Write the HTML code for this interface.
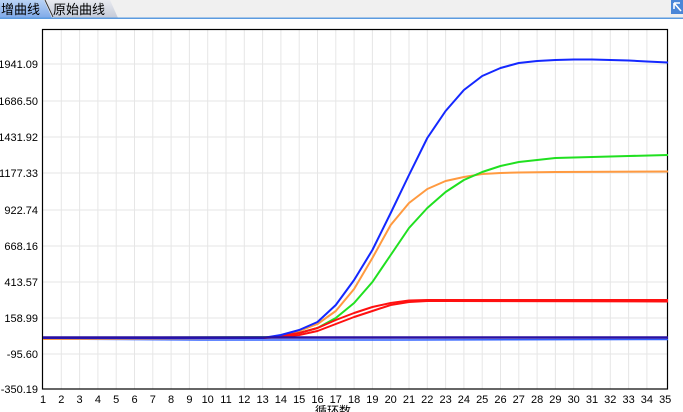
<!DOCTYPE html>
<html><head><meta charset="utf-8"><style>
body{margin:0;width:683px;height:412px;overflow:hidden;background:#fff;font-family:"Liberation Sans","Noto Sans CJK SC",sans-serif}
</style></head><body>
<svg width="683" height="412" xmlns="http://www.w3.org/2000/svg" style="position:absolute;left:0;top:0">
<defs><linearGradient id="tb" x1="0" y1="0" x2="0" y2="1"><stop offset="0" stop-color="#b9d3f5"/><stop offset="1" stop-color="#7fa9e8"/></linearGradient>
<linearGradient id="tg" x1="0" y1="0" x2="0" y2="1"><stop offset="0" stop-color="#e8eaf0"/><stop offset="1" stop-color="#c4cad8"/></linearGradient></defs>
<rect x="0" y="0" width="683" height="18" fill="#f0f0f0"/>
<polygon points="0,0 44,0 52,18 0,18" fill="url(#tb)"/>
<polygon points="46,0 110,0 118,18 54,18" fill="url(#tg)"/>
<line x1="45" y1="0" x2="53" y2="17" stroke="#333" stroke-width="1"/>
<rect x="0" y="17.5" width="683" height="1.5" fill="#5b9be0"/>
<rect x="671" y="0" width="12" height="14" fill="#4a86d8"/>
<path d="M674 3 L680 3 M674 3 L674 9 M674 3 L681 11" stroke="#fff" stroke-width="1.6" fill="none"/>
<text x="1" y="14" font-size="13" font-family="Noto Sans CJK SC,sans-serif" fill="#000">增曲线</text>
<text x="53" y="14" font-size="13" font-family="Noto Sans CJK SC,sans-serif" fill="#000">原始曲线</text>
<g stroke="#e6e6e6" stroke-width="1">
<path d="M61.3 29V389M79.6 29V389M97.9 29V389M116.2 29V389M134.5 29V389M152.8 29V389M171.1 29V389M189.4 29V389M207.7 29V389M226 29V389M244.3 29V389M262.6 29V389M280.9 29V389M299.2 29V389M317.5 29V389M335.8 29V389M354.1 29V389M372.4 29V389M390.7 29V389M409 29V389M427.3 29V389M445.6 29V389M463.9 29V389M482.2 29V389M500.5 29V389M518.8 29V389M537.1 29V389M555.4 29V389M573.7 29V389M592 29V389M610.3 29V389M628.6 29V389M646.9 29V389"/>
<path d="M42 64H668M42 101H668M42 137H668M42 173H668M42 210H668M42 246H668M42 282H668M42 318H668M42 354H668"/>
</g>
<rect x="42.5" y="29.5" width="625" height="359.5" fill="none" stroke="#000" stroke-width="1.2"/>
<g font-size="11" fill="#000" text-anchor="end">
<text x="38" y="68">1941.09</text><text x="38" y="105">1686.50</text><text x="38" y="141">1431.92</text><text x="38" y="177">1177.33</text><text x="38" y="214">922.74</text><text x="38" y="250">668.16</text><text x="38" y="286">413.57</text><text x="38" y="322">158.99</text><text x="38" y="358">-95.60</text><text x="38" y="393">-350.19</text>
</g>
<g font-size="11" fill="#000" text-anchor="middle">
<text x="43" y="403">1</text><text x="61.3" y="403">2</text><text x="79.6" y="403">3</text><text x="97.9" y="403">4</text><text x="116.2" y="403">5</text><text x="134.5" y="403">6</text><text x="152.8" y="403">7</text><text x="171.1" y="403">8</text><text x="189.4" y="403">9</text><text x="207.7" y="403">10</text><text x="226" y="403">11</text><text x="244.3" y="403">12</text><text x="262.6" y="403">13</text><text x="280.9" y="403">14</text><text x="299.2" y="403">15</text><text x="317.5" y="403">16</text><text x="335.8" y="403">17</text><text x="354.1" y="403">18</text><text x="372.4" y="403">19</text><text x="390.7" y="403">20</text><text x="409" y="403">21</text><text x="427.3" y="403">22</text><text x="445.6" y="403">23</text><text x="463.9" y="403">24</text><text x="482.2" y="403">25</text><text x="500.5" y="403">26</text><text x="518.8" y="403">27</text><text x="537.1" y="403">28</text><text x="555.4" y="403">29</text><text x="573.7" y="403">30</text><text x="592" y="403">31</text><text x="610.3" y="403">32</text><text x="628.6" y="403">33</text><text x="646.9" y="403">34</text><text x="665.2" y="403">35</text>
<text x="333" y="415" font-size="12" font-family="Noto Sans CJK SC,sans-serif">循环数</text>
</g>
<g fill="none" stroke-width="2" stroke-linejoin="round">
<polyline stroke="#3060ff" stroke-width="1.5" points="43,339 200,340 400,340 668,339.5"/>
<polyline stroke="#ff9a40" points="43,339 262.6,338 280.9,336 299.2,331 317.5,324 335.8,311 354.1,289 372.4,258 390.7,225 409,203 427.3,189 445.6,181 463.9,177 482.2,174 500.5,173 518.8,172.5 555.4,172 668,171.5"/>
<polyline stroke="#20e020" points="43,338 280.9,337 299.2,333 317.5,328 335.8,318 354.1,303 372.4,282 390.7,255 409,228 427.3,208 445.6,192 463.9,180 482.2,172 500.5,166 518.8,162 537.1,160 555.4,158 573.7,157.5 592,157 628.6,156 668,155"/>
<polyline stroke="#ff1010" points="43,338 262.6,338 280.9,337 299.2,335 317.5,331 335.8,324 354.1,317 372.4,311 390.7,305 409,302 427.3,301 445.6,301 668,301.5"/>
<polyline stroke="#ff1010" points="43,338 262.6,338 280.9,336 299.2,333 317.5,328 335.8,320 354.1,313 372.4,307 390.7,303 409,300.5 427.3,300 668,300"/>
<polyline stroke="#1428ff" points="43,338 262.6,338 280.9,335 299.2,330 317.5,322 335.8,305 354.1,280 372.4,250 390.7,213 409,175 427.3,138 445.6,111 463.9,90 482.2,76 500.5,68 518.8,63 537.1,61 555.4,60 573.7,59.5 592,59.5 610.3,60 628.6,60.5 646.9,61.5 668,62.5"/>
<line x1="43" y1="337.5" x2="668" y2="337.5" stroke="#2a10a0" stroke-width="2.5"/>
</g>
</svg>
</body></html>
